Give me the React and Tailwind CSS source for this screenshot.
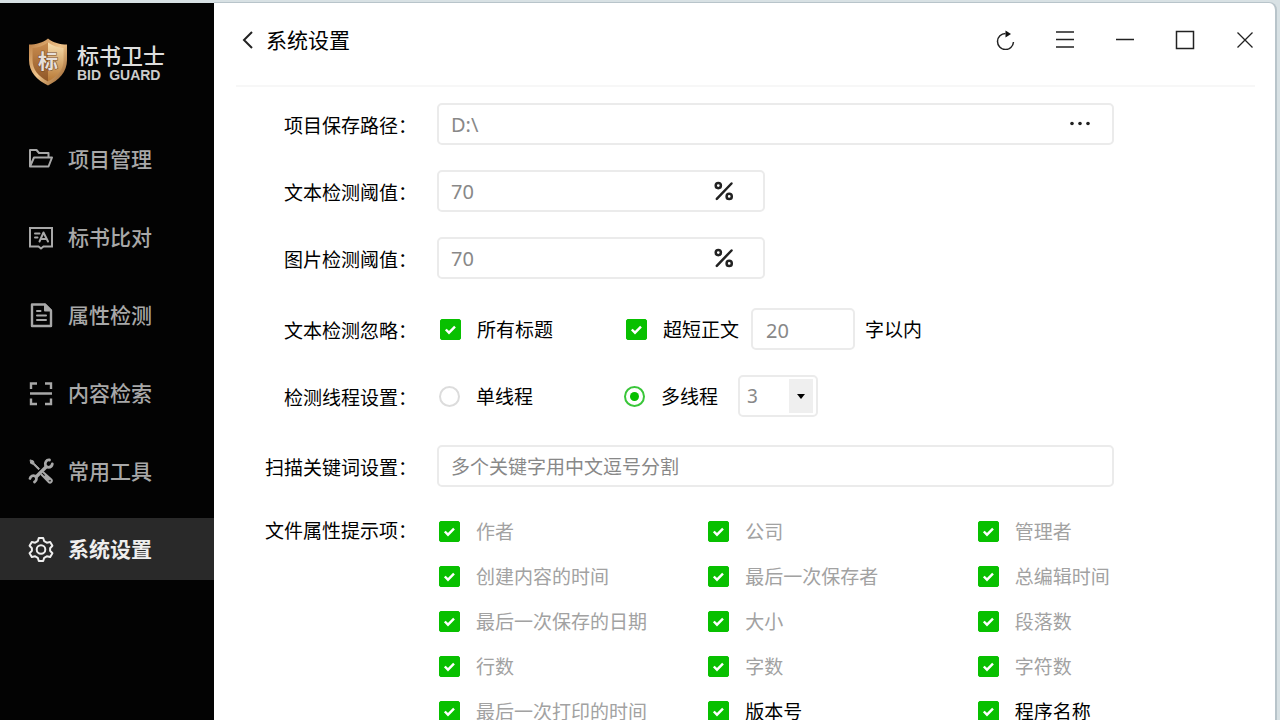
import React from "react";

const stroke = {
  fill: "none",
  stroke: "currentColor",
  strokeWidth: 2,
  strokeLinejoin: "round",
  strokeLinecap: "round",
};

function Icon({ children }) {
  return (
    <svg viewBox="0 0 26 26" className="size-[26px] shrink-0" aria-hidden="true" {...stroke}>
      {children}
    </svg>
  );
}

const navItems = [
  {
    label: "项目管理",
    icon: (
      <Icon>
        <path d="M2 20.500V4h6.500l2.500 3h9.500v4M2 20.500 6 11.500h18l-3.500 9z" />
      </Icon>
    ),
  },
  {
    label: "标书比对",
    icon: (
      <Icon>
        <path strokeLinejoin="miter" d="M2 4h22v18.500h-8.500L13 24.500l-2.500-2H2z" />
        <path d="M11.500 17.500 15.500 8.500l4.500 9M13 15h5.500M7 9.500h4.500M7 13.500h2.500" />
      </Icon>
    ),
  },
  {
    label: "属性检测",
    icon: (
      <Icon>
        <path strokeWidth="2.400" d="M4 2.500h13l6 6V24H4z" />
        <path fill="currentColor" d="M17 2.500v6h6z" />
        <path d="M9 9h3.500M9 13.500h9M9 18h9" />
      </Icon>
    ),
  },
  {
    label: "内容检索",
    icon: (
      <Icon>
        <path
          strokeLinecap="butt"
          strokeLinejoin="miter"
          strokeWidth="2.400"
          d="M3 9V3.500h6M17 3.500h6V9M23 18.500V24h-6M9 24H3v-5.500M2 13.500h22"
        />
      </Icon>
    ),
  },
  {
    label: "常用工具",
    icon: (
      <Icon>
        <path fill="currentColor" strokeWidth="1" d="M2.500 2 5.500 3 6 5.200l5.500 5.500-1 1L5 6.200 3 5.500z" />
        <path strokeWidth="3.400" strokeLinecap="butt" d="M8 19 18.500 8.500" />
        <path strokeWidth="2.800" d="M21.500 2c-3-.500-5 2.500-4 5.500.500 1 1.500 1.800 3 1.800 2 0 3.500-1.500 3.800-3.300M2 20.500c.500-2.500 3-3.500 5-2.500 2 1.200 2 4.500-.500 6" />
        <path strokeWidth="2" d="m15.500 14.500 7.800 7c1.500 1.800-.800 4-2.600 2.600l-7-7.400M17.500 18l3.500 3.500" />
      </Icon>
    ),
  },
  {
    label: "系统设置",
    active: true,
    icon: (
      <Icon>
        <path d="M10.800 2h4.400l1 3.200 2.600 1.500 3.400-.700 2.200 3.800-2.300 2.500v2.400l2.300 2.500-2.200 3.800-3.400-.700-2.600 1.500-1 3.200h-4.400l-1-3.200-2.600-1.500-3.400.700-2.200-3.800 2.300-2.500v-2.400L1.600 9.800 3.800 6l3.400.700 2.600-1.500z" />
        <circle cx="13" cy="13.500" r="4.300" />
      </Icon>
    ),
  },
];

const properties = [
  ["作者"], ["公司"], ["管理者"],
  ["创建内容的时间"], ["最后一次保存者"], ["总编辑时间"],
  ["最后一次保存的日期"], ["大小"], ["段落数"],
  ["行数"], ["字数"], ["字符数"],
  ["最后一次打印的时间"], ["版本号", true], ["程序名称", true],
];

function Shield() {
  return (
    <svg viewBox="0 0 40 48" className="h-12 w-10 shrink-0" aria-hidden="true">
      <defs>
        <linearGradient id="rim" x1="0" y1="0" x2="1" y2="1">
          <stop offset="0" stopColor="#b87a40" />
          <stop offset=".5" stopColor="#f0c58c" />
          <stop offset="1" stopColor="#8a5220" />
        </linearGradient>
        <linearGradient id="left" x1="0" y1="0" x2="0" y2="1">
          <stop offset="0" stopColor="#c98d50" />
          <stop offset="1" stopColor="#8f5626" />
        </linearGradient>
        <linearGradient id="right" x1="0" y1="0" x2="0" y2="1">
          <stop offset="0" stopColor="#f8dfaf" />
          <stop offset="1" stopColor="#b87834" />
        </linearGradient>
      </defs>
      <path fill="url(#rim)" d="M20 .5C15 4.500 8 6.500 1 6.500V22c0 12 8 20 19 25.500C31 42 39 34 39 22V6.500C32 6.500 25 4.500 20 .5z" />
      <path fill="url(#left)" d="M20 4.500C15 8 10 9.500 4.500 10v12c0 9.500 6 16.500 15.500 21.500z" />
      <path fill="url(#right)" d="M20 4.500C25 8 30 9.500 35.500 10v12c0 9.500-6 16.500-15.500 21.500z" />
      <text x="20" y="31" textAnchor="middle" fill="#e6dfda" stroke="#754a25" strokeWidth="1" paintOrder="stroke" className="text-[20px] font-bold">标</text>
    </svg>
  );
}

function Check({ children, strong = true }) {
  return (
    <label className="flex items-center gap-4 whitespace-nowrap">
      <span className="grid shrink-0">
        <input
          type="checkbox"
          defaultChecked
          className="peer size-[21px] appearance-none rounded-[2px] border border-gray-300 [grid-area:1/1] checked:border-[#08c000] checked:bg-[#08c000]"
        />
        <svg
          viewBox="0 0 21 21"
          className="pointer-events-none invisible size-[21px] [grid-area:1/1] peer-checked:visible"
          fill="none"
          stroke="#fff"
          strokeWidth="2.4"
          aria-hidden="true"
        >
          <path d="m5.800 10.500 3.200 3.200 6-6" />
        </svg>
      </span>
      <span className={strong ? "pt-px text-black" : "text-[#a2a2a2]"}>{children}</span>
    </label>
  );
}

function Radio({ children, ...props }) {
  return (
    <label className="flex items-center gap-4 whitespace-nowrap">
      <input
        type="radio"
        name="threads"
        className="size-[21px] shrink-0 appearance-none rounded-full border-2 border-[#dcdcdc] checked:border-[#39c639] checked:bg-[#08c000] checked:bg-clip-content checked:p-[4px]"
        {...props}
      />
      <span className="pt-px">{children}</span>
    </label>
  );
}

const field = "flex h-[42px] items-center rounded-[5px] border-2 border-[#ebebeb] bg-white";
const rowBase = "flex items-center gap-5";
const labelBase = "w-[180px] shrink-0 text-right whitespace-nowrap";

function Percent({ id, label }) {
  return (
    <div className={rowBase}>
      <label htmlFor={id} className={`${labelBase} pt-[3px]`}>{label}</label>
      <div className={`${field} w-[328px]`}>
        <input id={id} defaultValue="70" className="min-w-0 flex-1 pt-[2px] pl-3 text-[20px] text-[#888] outline-none" />
        <svg viewBox="0 0 20 20" className="mr-[29px] size-5 shrink-0" fill="none" stroke="#222" strokeWidth="2.500" strokeLinecap="round" role="img" aria-label="%">
          <circle cx="4.300" cy="4.600" r="2.600" />
          <circle cx="15.200" cy="15.400" r="2.600" />
          <path d="M17.500 2.500 2.800 17.800" />
        </svg>
      </div>
    </div>
  );
}

function WindowButton({ label, children }) {
  return (
    <button type="button" aria-label={label} className="size-5">
      <svg viewBox="0 0 20 20" className="size-5" fill="none" stroke="#222" strokeWidth="1.500" aria-hidden="true">
        {children}
      </svg>
    </button>
  );
}

export default function App() {
  return (
    <div lang="zh-CN" className="h-screen overflow-hidden bg-[#d8e1e4] pt-[2px] font-['Noto_Sans','Noto_Sans_CJK_SC',sans-serif] text-[19px] leading-6 text-black">
      <div className="flex h-full">
        <aside className="mt-px w-[214px] shrink-0 bg-[#030303]">
          <div className="flex h-[125px] items-start gap-[9px] pt-[35px] pl-7">
            <Shield />
            <div className="pt-[5px] text-[#dedede]">
              <div className="text-[22px] leading-6 font-medium">标书卫士</div>
              <div className="flex gap-2 font-['Liberation_Sans',sans-serif] text-[14px] leading-4 font-bold text-[#cccccc]">
                <span>BID</span>
                <span>GUARD</span>
              </div>
            </div>
          </div>
          <nav className="flex flex-col gap-4">
            {navItems.map(({ label, icon, active }) => (
              <a
                key={label}
                href={`#${label}`}
                aria-current={active ? "page" : undefined}
                className={`flex h-[62px] items-center gap-[14px] pl-7 text-[21px] ${
                  active ? "bg-[#292929] font-bold text-[#eeeeee]" : "font-medium text-[#a8a8a8]"
                }`}
              >
                {icon}
                <span>{label}</span>
              </a>
            ))}
          </nav>
        </aside>

        <main className="mr-[3px] min-w-0 flex-1 overflow-hidden rounded-tr-[8px] border-t border-r-2 border-[#b8c4ca] bg-white">
          <header className="mr-5 ml-[22px] flex h-[84px] items-center justify-between border-b-2 border-[#f7f7f7] pb-2">
            <div className="flex items-center gap-2">
              <button type="button" aria-label="返回" className="ml-[2px] size-5">
                <svg viewBox="0 0 20 20" className="size-5" fill="none" stroke="#222" strokeWidth="2" aria-hidden="true">
                  <path d="m14 2-8 8 8 8" />
                </svg>
              </button>
              <h1 className="text-[21px]">系统设置</h1>
            </div>
            <div className="flex gap-10">
              <WindowButton label="刷新">
                <path d="M10.500 3.500A8 8 0 1 0 18.500 12" />
                <path d="M10.500.500 16 4l-5.500 3.500z" fill="#111" stroke="none" />
              </WindowButton>
              <WindowButton label="菜单">
                <path d="M1 2h18M1 9.500h18M1 17h18" />
              </WindowButton>
              <WindowButton label="最小化">
                <path d="M1 9.500h18" />
              </WindowButton>
              <WindowButton label="最大化">
                <path d="M1.500 1.500h17v17h-17z" />
              </WindowButton>
              <WindowButton label="关闭">
                <path d="m2.500 2.500 15 15m0-15-15 15" strokeWidth="1.300" />
              </WindowButton>
            </div>
          </header>

          <form className="pt-4 pr-7 pl-[23px]">
            <div className="flex flex-col gap-[25px]">
              <div className={rowBase}>
                <label htmlFor="path" className={`${labelBase} pt-[3px]`}>项目保存路径：</label>
                <div className={`${field} w-full max-w-[677px]`}>
                  <input id="path" defaultValue="D:\" className="min-w-0 flex-1 pt-[2px] pl-3 text-[20px] text-[#888] outline-none" />
                  <button type="button" aria-label="选择路径" className="mr-[22px]">
                    <svg viewBox="0 0 20 20" className="size-5" fill="#222" aria-hidden="true">
                      <circle cx="2" cy="9.500" r="1.800" />
                      <circle cx="10" cy="9.500" r="1.800" />
                      <circle cx="18" cy="9.500" r="1.800" />
                    </svg>
                  </button>
                </div>
              </div>
              <Percent id="text-threshold" label="文本检测阈值：" />
              <Percent id="image-threshold" label="图片检测阈值：" />
            </div>

            <div className="mt-[29px] flex flex-col gap-[25px]">
              <div className={rowBase}>
                <span className={`${labelBase} pt-[3px]`}>文本检测忽略：</span>
                <div className="flex items-center pl-[3px]">
                  <div className="w-[186px]"><Check>所有标题</Check></div>
                  <Check>超短正文</Check>
                  <input aria-label="超短正文字数" defaultValue="20" className={`${field} mr-2.5 ml-3 w-[104px] pt-[2px] pl-[13px] text-[20px] text-[#888] outline-none`} />
                  <span className="pt-px">字以内</span>
                </div>
              </div>
              <div className={rowBase}>
                <span className={`${labelBase} pt-[3px]`}>检测线程设置：</span>
                <div className="flex items-center pl-[2px]">
                  <div className="w-[185px]"><Radio>单线程</Radio></div>
                  <Radio defaultChecked>多线程</Radio>
                  <div className="ml-5 grid items-center">
                    <select aria-label="线程数" defaultValue="3" className={`${field} w-20 appearance-none pl-[7px] text-[#888] outline-none [grid-area:1/1]`}>
                      <option>1</option>
                      <option>2</option>
                      <option>3</option>
                      <option>4</option>
                    </select>
                    <span className="pointer-events-none mr-[5px] flex h-[34px] w-6 items-center justify-center justify-self-end bg-[#efefef] [grid-area:1/1]">
                      <svg viewBox="0 0 8 5" className="h-[5px] w-2" aria-hidden="true">
                        <path d="M0 0h8L4 5z" />
                      </svg>
                    </span>
                  </div>
                </div>
              </div>
            </div>

            <div className={`${rowBase} mt-7`}>
              <label htmlFor="keywords" className={`${labelBase} pt-[3px]`}>扫描关键词设置：</label>
              <div className={`${field} w-full max-w-[677px]`}>
                <input id="keywords" placeholder="多个关键字用中文逗号分割" className="min-w-0 flex-1 pt-[2px] pl-3 outline-none placeholder:text-[#888]" />
              </div>
            </div>

            <div role="group" aria-labelledby="properties-label" className="mt-[22px] flex gap-5">
              <span id="properties-label" className={`${labelBase} pt-[10px]`}>文件属性提示项：</span>
              <div className="grid flex-1 auto-rows-[45px] grid-cols-3 items-center pl-[2px]">
                {properties.map(([name, strong = false]) => (
                  <Check key={name} strong={strong}>{name}</Check>
                ))}
              </div>
            </div>
          </form>
        </main>
      </div>
    </div>
  );
}
